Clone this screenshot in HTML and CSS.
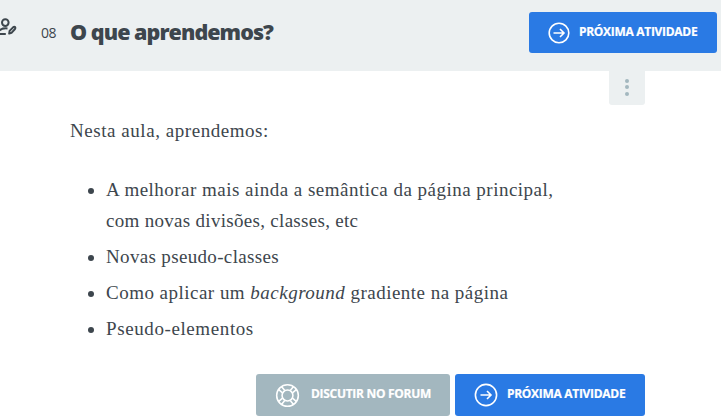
FILE: index.html
```html
<!DOCTYPE html>
<html lang="pt-BR">
<head>
<meta charset="utf-8">
<title>O que aprendemos?</title>
<link rel="stylesheet" href="styles.css">
</head>
<body>
<header class="task-header">
  <svg class="user-icon" viewBox="0 0 18 20" fill="none" stroke="currentColor" stroke-width="2">
    <circle cx="5.3" cy="4.6" r="3.3"/>
    <path d="M-3 15.6C-1 11.2 2 9.9 7.5 10.4M-3 15.9H5.8"/>
    <path d="M9.2 15.6l.4-2.7 3.7-3.8q1-.7 1.8 0 .7.9-.1 1.9l-3.5 3.9z" stroke-linejoin="round"/>
  </svg>
  <h1 class="task-title"><span class="task-number">08</span><span class="task-name">O que aprendemos?</span></h1>
  <a class="button button-next button-top">
    <svg class="arrow-icon" viewBox="0 0 24 24" fill="none" stroke="currentColor" stroke-width="1.6"><circle cx="12" cy="12" r="9.8"/><path d="M6.5 12H17M13 8l4 4-4 4"/></svg>
    <span class="label">PRÓXIMA ATIVIDADE</span>
  </a>
</header>
<main class="content">
  <div class="options"><i></i><i></i><i></i></div>
  <p class="intro">Nesta aula, aprendemos:</p>
  <ul class="topics">
    <li><span class="semantics">A melhorar mais ainda a semântica da página principal,</span><br><span class="divisions">com novas divisões, classes, etc</span></li>
    <li><span class="pseudo">Novas pseudo-classes</span></li>
    <li><span class="gradient">Como aplicar um <em>background</em> gradiente na página</span></li>
    <li><span class="elements">Pseudo-elementos</span></li>
  </ul>
  <nav class="actions">
    <a class="button button-forum">
      <svg class="forum-icon" viewBox="0 0 24 24" fill="none" stroke="currentColor" stroke-width="1.5"><circle cx="12" cy="12" r="10.4"/><circle cx="12" cy="12" r="5.2"/><path d="M3.3 6.2l3.9 3.2M6.2 3.3l3.2 3.9M17.8 3.3l-3.2 3.9M20.7 6.2l-3.9 3.2M20.7 17.8l-3.9-3.2M17.8 20.7l-3.2-3.9M6.2 20.7l3.2-3.9M3.3 17.8l3.9-3.2"/></svg>
      <span class="label">DISCUTIR NO FORUM</span>
    </a>
    <a class="button button-next">
      <svg class="arrow-icon" viewBox="0 0 24 24" fill="none" stroke="currentColor" stroke-width="1.6"><circle cx="12" cy="12" r="10.6"/><path d="M6.5 12H17M13 8l4 4-4 4"/></svg>
      <span class="label">PRÓXIMA ATIVIDADE</span>
    </a>
  </nav>
</main>
</body>
</html>
```
FILE: styles.css
```css
* { box-sizing: border-box; }
body {
  margin: 0;
  height: 418px;
  overflow: hidden;
  background: #fff;
  color: #3d464d;
  font-family: "Open Sans", sans-serif;
}
.task-header {
  display: flex;
  align-items: flex-start;
  height: 71px;
  padding-right: 4px;
  background: #ecf0f1;
}
.user-icon { width: 18px; height: 20px; margin-top: 18px; }
.task-title {
  display: flex;
  align-items: flex-start;
  margin: 17px auto 0 23px;
  line-height: 30px;
  white-space: nowrap;
}
.task-number { width: 29px; margin-top: 1px; font-size: 14px; font-weight: 400; letter-spacing: -.6px; }
.task-name { font-size: 21.5px; font-weight: 800; letter-spacing: -.95px; }
.button {
  display: flex;
  align-items: center;
  height: 42px;
  border-radius: 3px;
  color: #fff;
  white-space: nowrap;
}
.label { font-size: 12px; font-weight: 700; line-height: 18px; letter-spacing: -.3px; margin-top: -2px; -webkit-text-stroke: .2px currentColor; }
.button-next { width: 190px; padding-left: 19px; background: #2a7ae4; }
.button-top { width: 188px; height: 41px; margin-top: 12px; padding-left: 18px; }
.arrow-icon { width: 24px; height: 24px; margin-right: 9px; }
.button-top .arrow-icon { margin-right: 8px; }
.button-forum { width: 194px; padding-left: 19px; background: #a3b7bf; }
.forum-icon { width: 25px; height: 25px; margin-right: 11px; }
.content {
  width: 575px;
  margin-left: 70px;
  font-family: "Source Serif Pro", "Liberation Serif", serif;
  font-size: 19px;
  line-height: 31px;
}
.options {
  display: flex;
  flex-direction: column;
  align-items: center;
  gap: 2.3px;
  width: 36px;
  height: 34px;
  margin-left: auto;
  padding-top: 8px;
  border-radius: 0 0 3px 3px;
  background: #ecf0f1;
}
.options i { width: 4px; height: 4px; border-radius: 50%; background: #a3b7bf; }
.intro { margin: 10px 0 28px; letter-spacing: .55px; }
.topics { margin: 0; padding: 0 0 0 36px; list-style: none; white-space: nowrap; }
.topics li { margin-bottom: 5px; }
.topics li::before {
  content: "";
  float: left;
  width: 6px;
  height: 6px;
  margin: 14px 0 0 -18px;
  border-radius: 50%;
  background: #3d464d;
}
.semantics, .gradient { letter-spacing: .48px; }
.divisions { letter-spacing: .3px; }
.pseudo { letter-spacing: .34px; }
.elements { letter-spacing: .6px; }
.actions {
  display: flex;
  justify-content: flex-end;
  gap: 5px;
  margin-top: 30px;
  font-family: "Open Sans", sans-serif;
}
```
